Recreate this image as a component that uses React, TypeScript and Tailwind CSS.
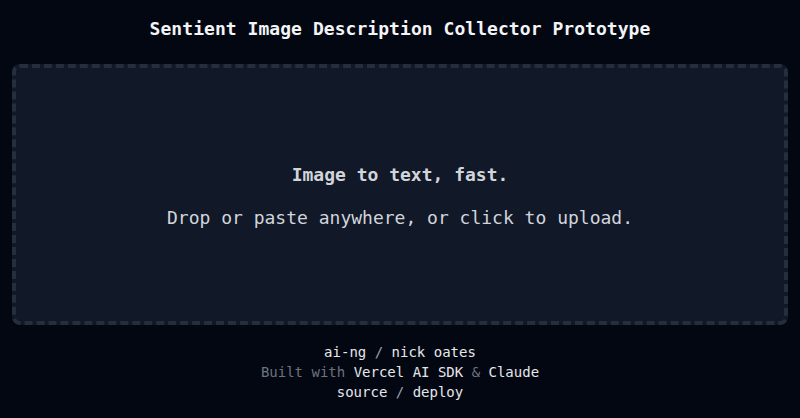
import React from 'react'

const mono = "font-['DejaVu_Sans_Mono','Liberation_Mono',monospace]"

export default function App() {
  return (
    <div className={`min-h-[418px] w-full bg-[#030712] px-3 pt-[15px] ${mono}`}>
      <h1 className="h-7 text-center text-[18px] font-bold leading-7 tracking-[0.05px] text-[#f3f4f6]">
        Sentient Image Description Collector Prototype
      </h1>

      {/* drop zone */}
      <div className="mt-[21px] flex h-[261px] cursor-pointer flex-col items-center justify-center rounded-lg border-4 border-dashed border-[#252e3c] bg-[#111827] pt-1">
        <p className="text-[18px] font-semibold leading-7 text-[#d1d5db]">Image to text, fast.</p>
        <p className="mt-[15px] text-[18px] leading-7 text-[#d1d5db]">
          Drop or paste anywhere, or click to upload.
        </p>
      </div>

      {/* footer */}
      <div className="mt-[17px] flex flex-col items-center text-[14px] leading-5 text-[#e5e7eb]">
        <p>
          <a>ai-ng</a> <span className="text-[#9ca3af]">/</span> <a>nick oates</a>
        </p>
        <p className="text-[#6b7280]">
          Built with <a className="text-[#e5e7eb]">Vercel AI SDK</a> &amp;{' '}
          <a className="text-[#e5e7eb]">Claude</a>
        </p>
        <p>
          <a>source</a> <span className="text-[#9ca3af]">/</span> <a>deploy</a>
        </p>
      </div>
    </div>
  )
}
